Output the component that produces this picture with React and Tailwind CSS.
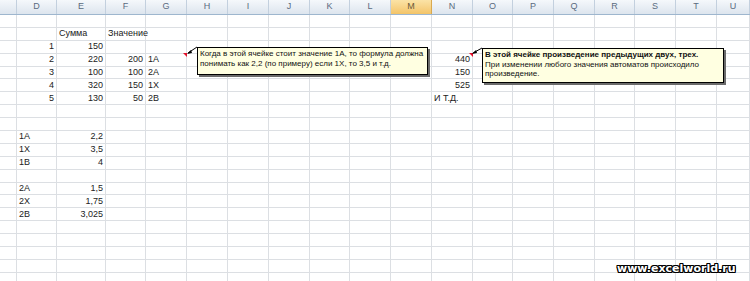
import React from "react";

const COLS =
  "grid grid-cols-[17px_40px_49px_40px_41px_41px_41px_41px_40px_41px_41px_41px_40px_41px_41px_40px_41px_41px_1fr]";

const HEAD = ["", "D", "E", "F", "G", "H", "I", "J", "K", "L", "M", "N", "O", "P", "Q", "R", "S", "T", "U"];

// row index -> { colIndex: [text, align] }
const DATA = {
  1: { 2: ["Сумма", "l"], 3: ["Значение", "l"] },
  2: { 1: ["1", "r"], 2: ["150", "r"] },
  3: { 1: ["2", "r"], 2: ["220", "r"], 3: ["200", "r"], 4: ["1A", "l"], 11: ["440", "r"] },
  4: { 1: ["3", "r"], 2: ["100", "r"], 3: ["100", "r"], 4: ["2A", "l"], 11: ["150", "r"] },
  5: { 1: ["4", "r"], 2: ["320", "r"], 3: ["150", "r"], 4: ["1X", "l"], 11: ["525", "r"] },
  6: { 1: ["5", "r"], 2: ["130", "r"], 3: ["50", "r"], 4: ["2B", "l"], 11: ["И Т.Д.", "l"] },
  9: { 1: ["1A", "l"], 2: ["2,2", "r"] },
  10: { 1: ["1X", "l"], 2: ["3,5", "r"] },
  11: { 1: ["1B", "l"], 2: ["4", "r"] },
  13: { 1: ["2A", "l"], 2: ["1,5", "r"] },
  14: { 1: ["2X", "l"], 2: ["1,75", "r"] },
  15: { 1: ["2B", "l"], 2: ["3,025", "r"] },
};

const ROWS = Array.from({ length: 21 }, (_, i) => i);

export default function App() {
  return (
    <div className="relative w-[750px] h-[281px] overflow-hidden bg-white font-['Liberation_Sans',Arial,sans-serif] text-[9px] text-[#222]">
      {/* header */}
      <div className={`${COLS} h-[15px] border-b border-[#9eb6ce]`}>
        {HEAD.map((h, i) => (
          <div
            key={i}
            className={`flex items-center justify-center border-r ${
              h === "M"
                ? "bg-gradient-to-b from-[#fbe3a6] to-[#f3c468] border-[#d9a94f] text-[#6b5a3a]"
                : "bg-gradient-to-b from-[#f5f8fb] to-[#dde5ee] border-[#c3d0de] text-[#5a6b80]"
            }`}
          >
            {h}
          </div>
        ))}
      </div>
      {/* grid rows */}
      {ROWS.map((r) => (
        <div key={r} className={`${COLS} h-[12.9px]`}>
          {HEAD.map((_, c) => {
            const cell = DATA[r] && DATA[r][c];
            return (
              <div
                key={c}
                className={`flex items-center border-r border-b border-[#dcdfe3] leading-none whitespace-nowrap ${
                  cell && cell[1] === "r" ? "justify-end pr-[2px]" : "justify-start pl-[2px]"
                }`}
              >
                {cell ? cell[0] : ""}
              </div>
            );
          })}
        </div>
      ))}

      {/* comment indicators and arrows */}
      <svg className="absolute left-0 top-0" width="750" height="281">
        <polygon points="183,53 187,53 187,57" fill="#e0102a" />
        <line x1="188" y1="53" x2="197" y2="47" stroke="#000" strokeWidth="1" />
        <polygon points="187,54 191,50 192,53" fill="#000" />
        <polygon points="469,53 473,53 473,57" fill="#e0102a" />
        <line x1="473" y1="53" x2="482" y2="48" stroke="#000" strokeWidth="1" />
        <polygon points="472,54 476,50 477,53" fill="#000" />
      </svg>

      {/* comment 1 */}
      <div className="absolute left-[197px] top-[47px] w-[231px] h-[28px] bg-[#ffffe1] border border-black shadow-[2px_2px_0_0_#6b6b6b] px-[2px] pt-[1px] text-[8px] leading-[10px] text-[#111] font-['Liberation_Sans',Arial,sans-serif]">
        <div>Когда в этой ячейке стоит значение 1А, то формула должна</div>
        <div>понимать как 2,2 (по примеру) если 1Х, то 3,5 и т.д.</div>
      </div>

      {/* comment 2 */}
      <div className="absolute left-[482px] top-[48px] w-[242px] h-[35px] bg-[#ffffe1] border border-black shadow-[2px_2px_0_0_#6b6b6b] px-[2px] pt-[1px] text-[8px] leading-[9.5px] text-[#111] font-['Liberation_Sans',Arial,sans-serif]">
        <div className="font-bold">В этой ячейке произведение предыдущих двух, трех.</div>
        <div>При изменении любого значения автоматов происходило</div>
        <div>произведение.</div>
      </div>

      {/* watermark */}
      <div className="absolute left-[617px] top-[262px] font-['DejaVu_Sans',Verdana,sans-serif] font-bold text-[11px] leading-[14px] text-white [text-shadow:1px_0_0_#000,-1px_0_0_#000,0_1px_0_#000,0_-1px_0_#000,1px_1px_0_#000,-1px_-1px_0_#000,1px_-1px_0_#000,-1px_1px_0_#000]">
        www.excelworld.ru
      </div>
    </div>
  );
}
